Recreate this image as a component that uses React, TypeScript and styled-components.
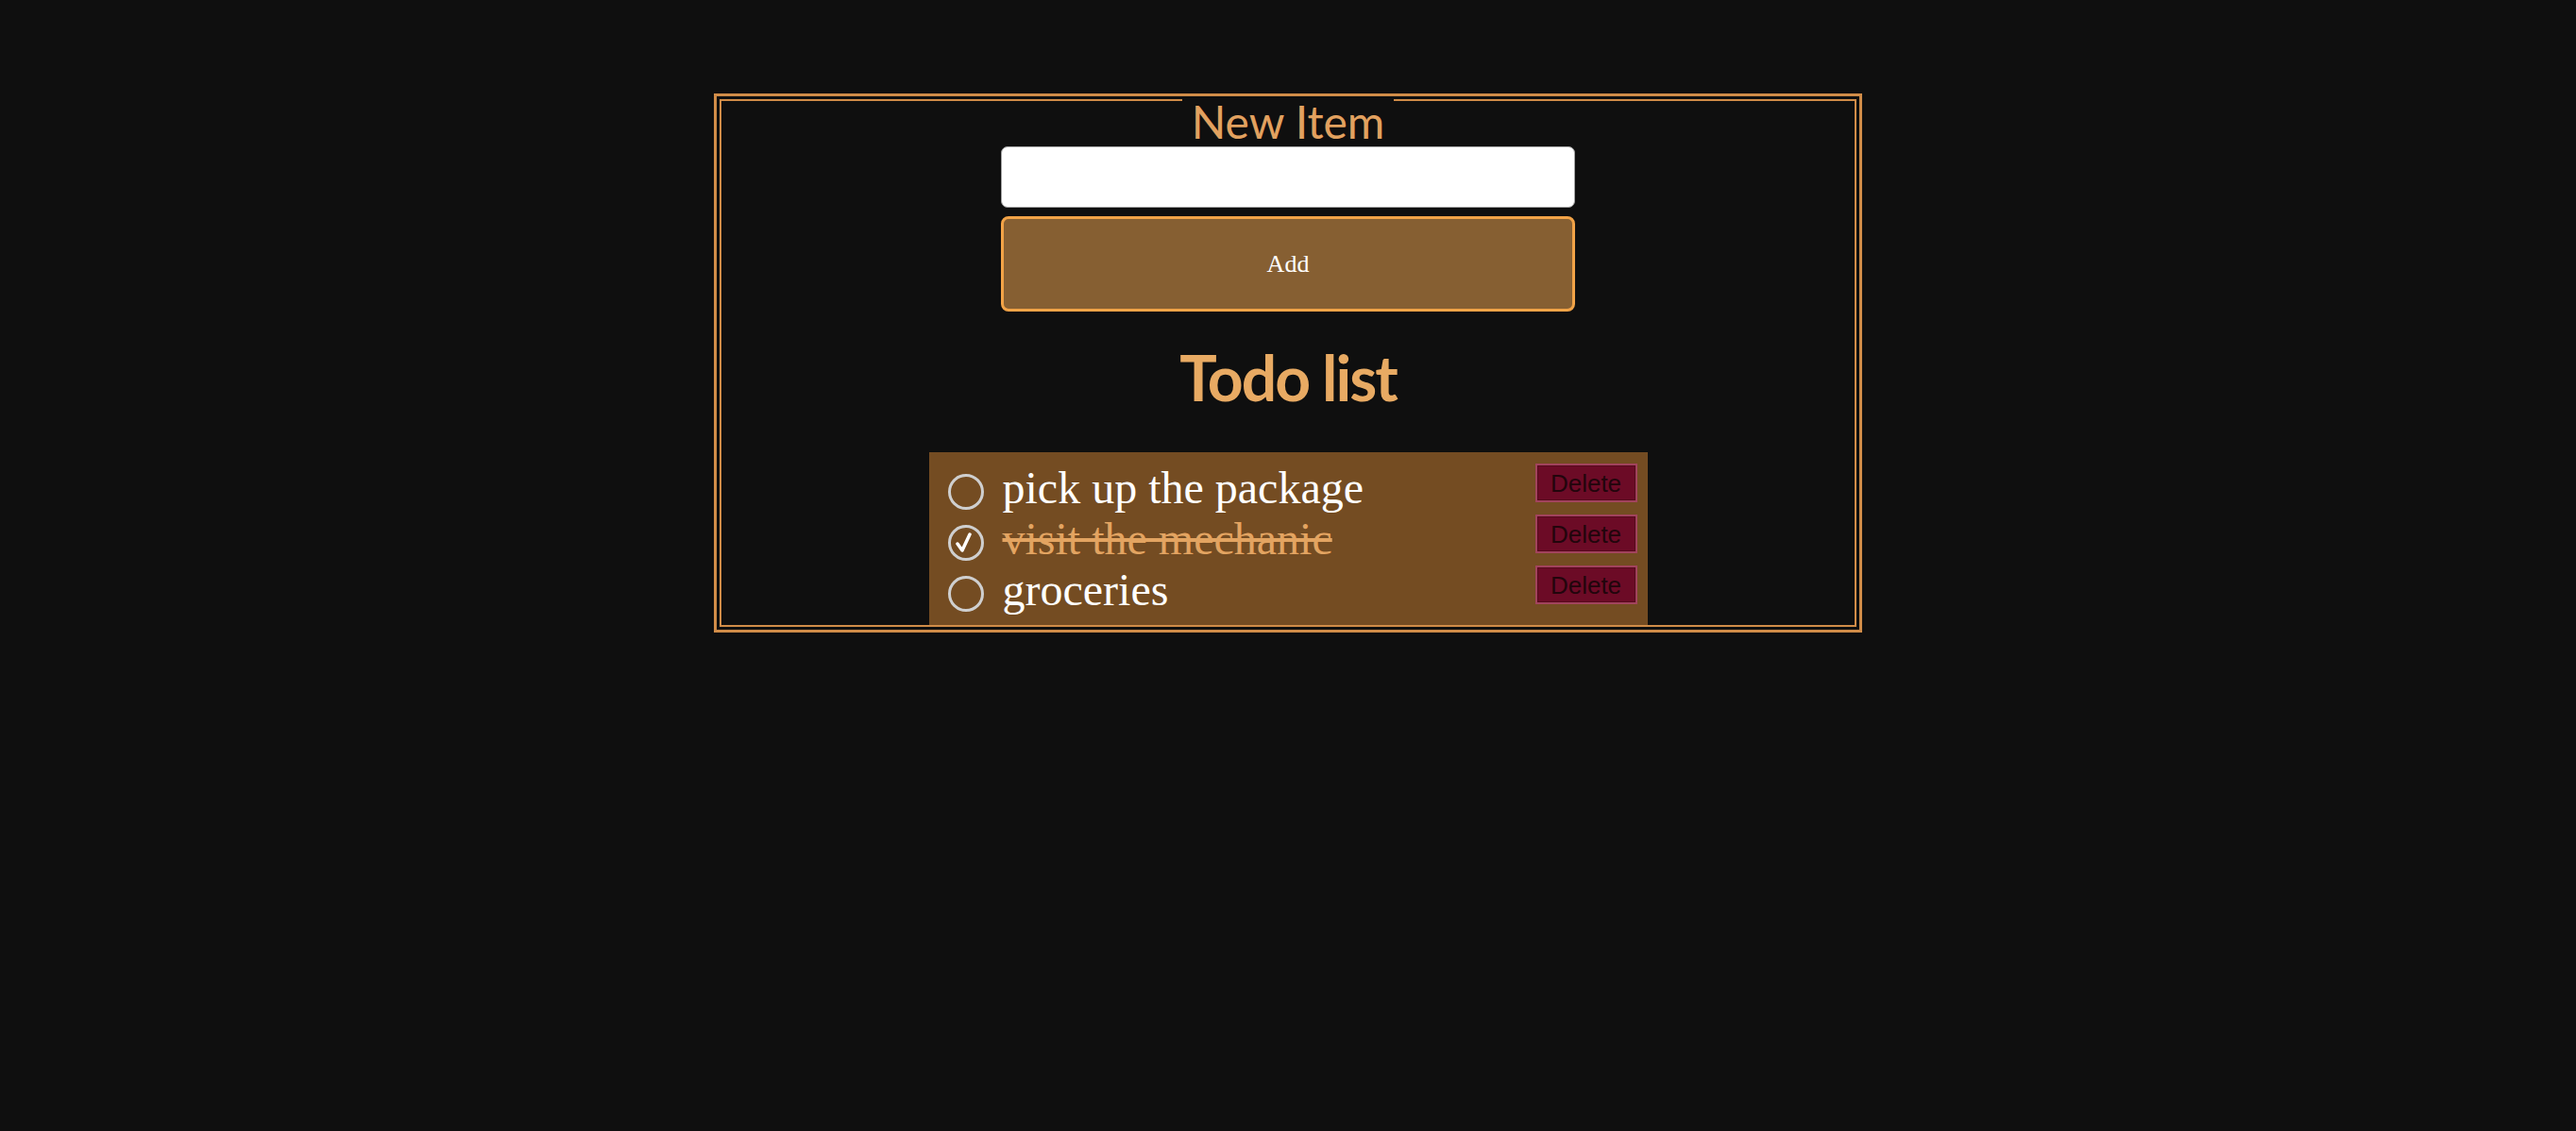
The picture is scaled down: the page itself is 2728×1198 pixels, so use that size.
import styled, { createGlobalStyle } from 'styled-components';

const GlobalStyle = createGlobalStyle`
    html, body {
        margin: 0;
        padding: 0;
        background: #0f0f0f;
    }
    body {
        font-family: "Liberation Serif", "Times New Roman", serif;
    }
`;

const Page = styled.div`
    min-height: 1198px;
    padding-top: 99px;
    box-sizing: border-box;
    display: flex;
    justify-content: center;
    align-items: flex-start;
`;

const Frame = styled.div`
    width: 1216px;
    box-sizing: border-box;
    border: 3px solid #d08c48;
    padding: 3px;
`;

const Inner = styled.div`
    border: 2px solid #d08c48;
    border-top: none;
    display: flex;
    flex-direction: column;
    align-items: center;
`;

const LegendRow = styled.div`
    align-self: stretch;
    display: flex;
    align-items: flex-start;

    &::before,
    &::after {
        content: '';
        flex: 1;
        border-top: 2px solid #d08c48;
    }
`;

const Legend = styled.span`
    padding: 5px 10px 0;
    font-family: Lato, "Noto Sans", sans-serif;
    font-size: 48px;
    line-height: 38px;
    color: #e2a15f;
`;

const TextInput = styled.input`
    margin-top: 7px;
    width: 608px;
    height: 65px;
    box-sizing: border-box;
    border: 1px solid #a0a0a0;
    border-radius: 7px;
    background: #ffffff;
    outline: none;
    padding: 0 12px;
    font-size: 24px;
`;

const AddButton = styled.button`
    margin-top: 9px;
    width: 608px;
    height: 101px;
    box-sizing: border-box;
    border: 3px solid #f2a347;
    border-radius: 8px;
    background: #865f32;
    color: #ffffff;
    font-family: "Liberation Serif", "Times New Roman", serif;
    font-size: 26px;
    cursor: pointer;
`;

const Heading = styled.h1`
    margin: 37px 0 46px;
    font-family: Lato, "Noto Sans", sans-serif;
    font-weight: 700;
    font-size: 66px;
    letter-spacing: -2px;
    line-height: 66px;
    color: #e8aa63;
`;

const List = styled.ul`
    list-style: none;
    margin: 0;
    width: 761px;
    box-sizing: border-box;
    padding: 11px 11px 10px 19px;
    background: #744c22;
`;

const Row = styled.li`
    display: flex;
    align-items: flex-start;
    height: 54px;
`;

const Radio = styled.svg`
    flex: none;
    width: 40px;
    height: 40px;
    margin-top: 11px;
    margin-right: 19px;
    cursor: pointer;
`;

const ItemText = styled.span<{ $done: boolean }>`
    font-size: 48px;
    line-height: 54px;
    white-space: nowrap;
    color: ${p => (p.$done ? '#e3a461' : '#ffffff')};
    text-decoration: ${p => (p.$done ? 'line-through' : 'none')};
`;

const DeleteButton = styled.button`
    margin-left: auto;
    margin-top: 1px;
    width: 108px;
    height: 41px;
    box-sizing: border-box;
    padding: 0;
    border: 2px solid #a2435d;
    box-shadow: inset 0 0 0 1px #560a1d;
    background: #6c0b26;
    color: #22050c;
    font-family: "Liberation Sans", Arial, sans-serif;
    font-size: 26px;
    line-height: 1;
    cursor: pointer;
`;

const todos = [
    { text: 'pick up the package', done: false },
    { text: 'visit the mechanic', done: true },
    { text: 'groceries', done: false },
];

const RadioIcon = ({ checked }: { checked: boolean }) => (
    <Radio viewBox="0 0 40 40">
        <circle cx="20" cy="20" r="17.5" fill="none" stroke="#cfcfcf" strokeWidth="3" />
        {checked && (
            <path
                d="M11 21 L16 28 L24 11"
                fill="none"
                stroke="#ffffff"
                strokeWidth="3.5"
                strokeLinecap="round"
                strokeLinejoin="round"
            />
        )}
    </Radio>
);

export default function App() {
    return (
        <>
            <GlobalStyle />
            <Page>
                <Frame>
                    <Inner>
                        <LegendRow>
                            <Legend>New Item</Legend>
                        </LegendRow>
                        <TextInput type="text" />
                        <AddButton>Add</AddButton>
                        <Heading>Todo list</Heading>
                        <List>
                            {todos.map(todo => (
                                <Row key={todo.text}>
                                    <RadioIcon checked={todo.done} />
                                    <ItemText $done={todo.done}>{todo.text}</ItemText>
                                    <DeleteButton>Delete</DeleteButton>
                                </Row>
                            ))}
                        </List>
                    </Inner>
                </Frame>
            </Page>
        </>
    );
}
